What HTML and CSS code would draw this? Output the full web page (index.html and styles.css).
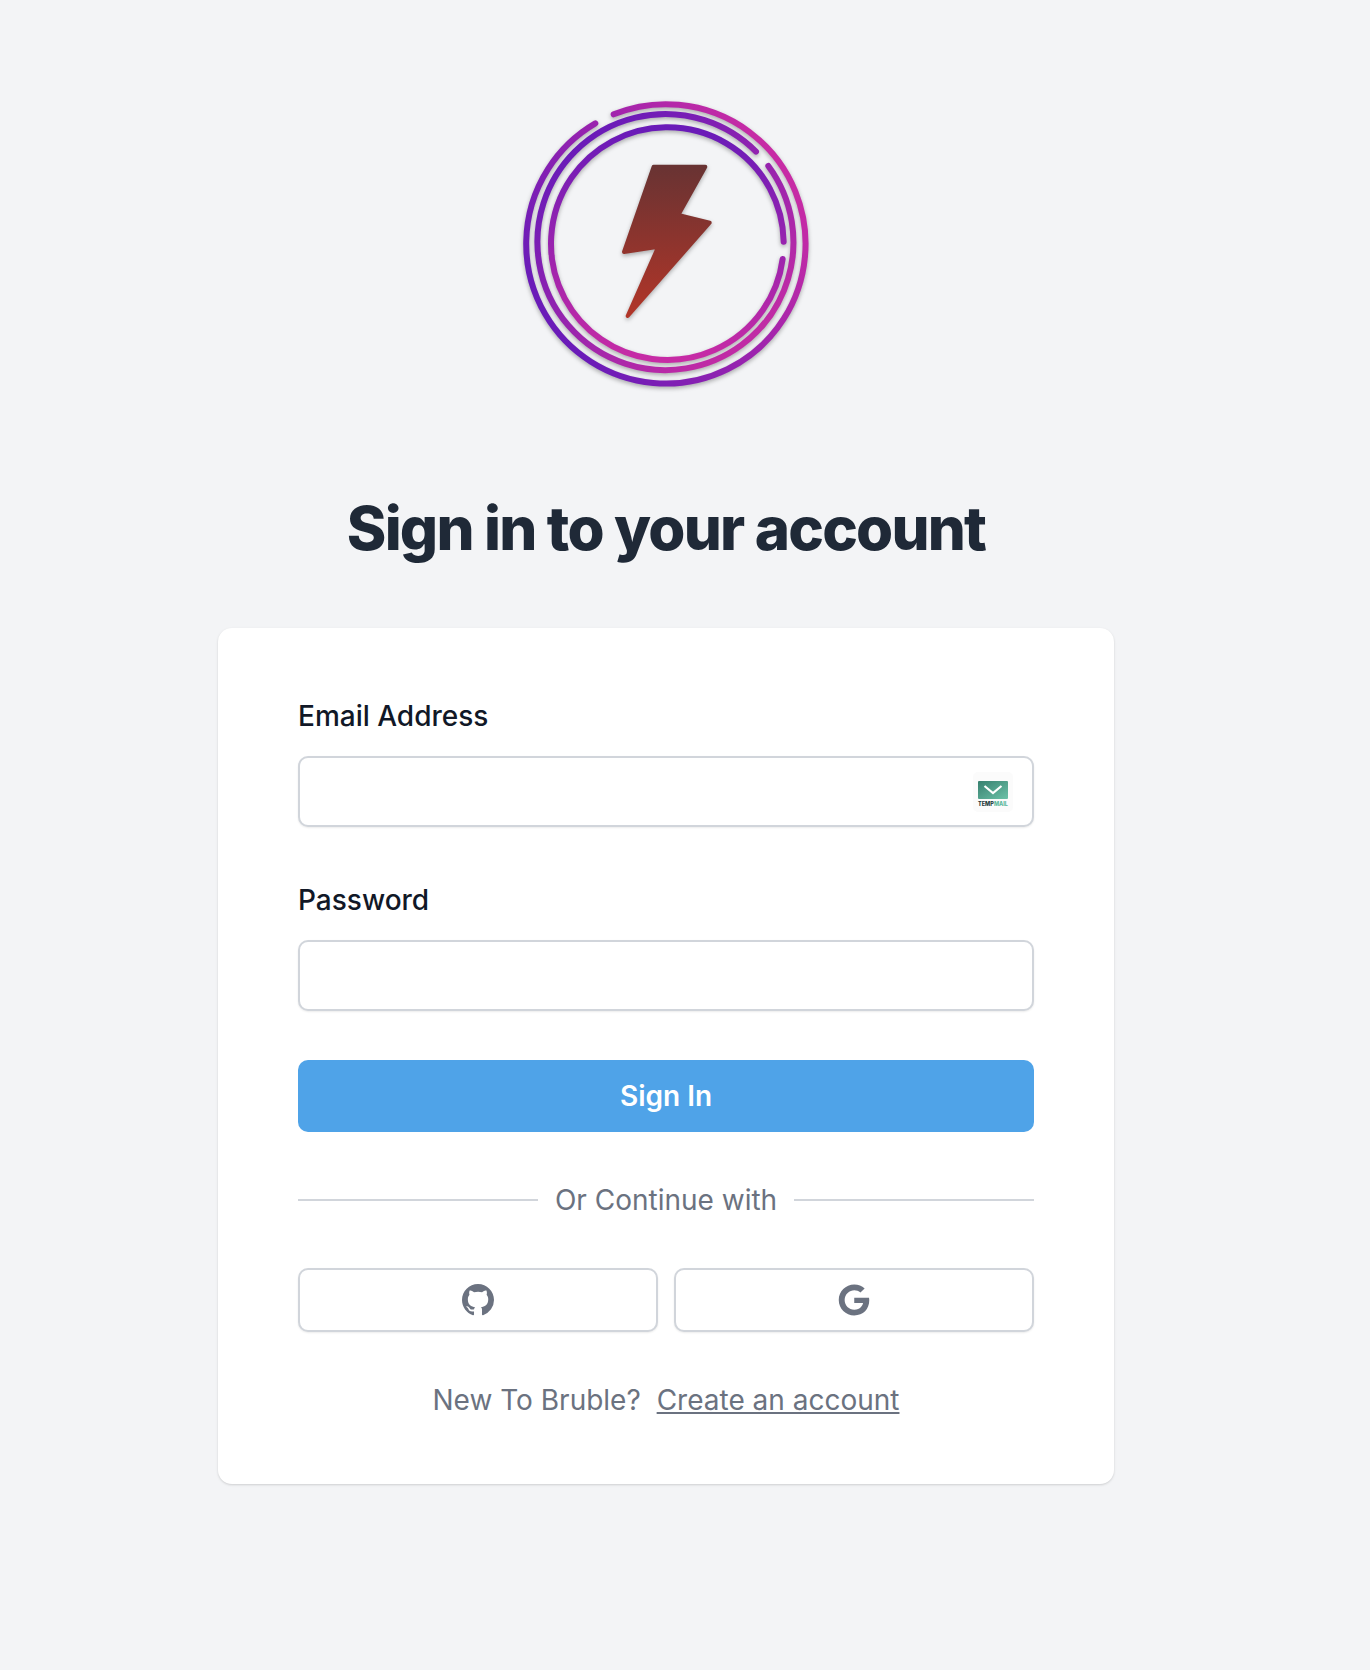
FILE: index.html
```html
<!DOCTYPE html>
<html lang="en">
<head>
<meta charset="utf-8">
<title>Sign in</title>
<link rel="stylesheet" href="styles.css">
</head>
<body>
<main class="page">
  <svg class="logo" viewBox="0 0 990 960" width="330" height="320" aria-label="Bruble logo">
    <defs>
      <linearGradient id="g1" gradientUnits="userSpaceOnUse" x1="120" y1="650" x2="800" y2="200"><stop offset="0" stop-color="#6a1bb8"/><stop offset="1" stop-color="#c72ba5"/></linearGradient>
      <linearGradient id="g2" gradientUnits="userSpaceOnUse" x1="230" y1="200" x2="700" y2="800"><stop offset="0" stop-color="#6a1bb8"/><stop offset="1" stop-color="#c02ba5"/></linearGradient>
      <linearGradient id="g3" gradientUnits="userSpaceOnUse" x1="500" y1="150" x2="500" y2="840"><stop offset="0" stop-color="#6a1bb8"/><stop offset="1" stop-color="#c72ba5"/></linearGradient>
      <linearGradient id="g4" gradientUnits="userSpaceOnUse" x1="500" y1="255" x2="500" y2="712"><stop offset="0" stop-color="#683333"/><stop offset="1" stop-color="#b23528"/></linearGradient>
    </defs>
    <g class="rings">
      <path stroke="url(#g1)" d="M338 103A419 419 0 1 1 283 130"/>
      <path stroke="url(#g2)" d="M802 258A384 384 0 1 1 765 215"/>
      <path stroke="url(#g3)" d="M845 537A349 349 0 1 1 848 485"/>
    </g>
    <path class="bolt" fill="url(#g4)" stroke="url(#g4)" d="M458 260H613L532 405L626 428L380 708L472 500L369 516Z"/>
  </svg>

  <h1 class="title">Sign in to your account</h1>

  <section class="card">
    <form class="form">
      <div class="field">
        <label class="label" for="email">Email Address</label>
        <div class="input-wrap">
          <input class="input" id="email" type="email">
          <span class="tempmail">
            <svg viewBox="0 0 30 18" width="30" height="18">
              <defs><linearGradient id="gm" x1="0" y1="0" x2="1" y2="1"><stop offset="0" stop-color="#37806f"/><stop offset="1" stop-color="#6cc2a8"/></linearGradient></defs>
              <rect width="30" height="18" rx="1" fill="url(#gm)"/>
              <path d="M6.500 5l8.500 7 8.500-7" fill="none" stroke="#fff" stroke-width="2.200"/>
            </svg>
            <span class="tempmail-text">TEMP<b class="tempmail-accent">MAIL</b></span>
          </span>
        </div>
      </div>
      <div class="field">
        <label class="label" for="password">Password</label>
        <input class="input" id="password" type="password">
      </div>
      <button class="submit" type="button">Sign In</button>
    </form>

    <div class="divider"><span class="divider-text">Or Continue with</span></div>

    <div class="socials">
      <button class="social" type="button" aria-label="GitHub">
        <svg viewBox="0 0 16 16" width="32" height="32" fill="#6b7280"><path d="M8 0C3.58 0 0 3.58 0 8c0 3.54 2.29 6.53 5.47 7.59.4.07.55-.17.55-.38 0-.19-.01-.82-.01-1.49-2.01.37-2.53-.49-2.69-.94-.09-.23-.48-.94-.82-1.13-.28-.15-.68-.52-.01-.53.63-.01 1.08.58 1.23.82.72 1.21 1.87.87 2.33.66.07-.52.28-.87.51-1.07-1.78-.2-3.64-.89-3.64-3.95 0-.87.31-1.59.82-2.15-.08-.2-.36-1.02.08-2.12 0 0 .67-.21 2.2.82.64-.18 1.32-.27 2-.27.68 0 1.36.09 2 .27 1.53-1.04 2.2-.82 2.2-.82.44 1.1.16 1.92.08 2.12.51.56.82 1.27.82 2.15 0 3.07-1.87 3.75-3.65 3.95.29.25.54.73.54 1.48 0 1.07-.01 1.93-.01 2.2 0 .21.15.46.55.38A8.013 8.013 0 0016 8c0-4.42-3.58-8-8-8z"/></svg>
      </button>
      <button class="social" type="button" aria-label="Google">
        <svg viewBox="0 0 488 512" width="32" height="32" fill="#6b7280"><path d="M488 261.8C488 403.3 391.1 504 248 504 110.8 504 0 393.2 0 256S110.8 8 248 8c66.8 0 123 24.5 166.3 64.9l-67.5 64.9C258.5 52.6 94.3 116.6 94.3 256c0 86.5 69.1 156.6 153.7 156.6 98.2 0 135-70.4 140.8-106.9H248v-85.3h236.1c2.3 12.7 3.9 24.9 3.9 41.4z"/></svg>
      </button>
    </div>

    <p class="signup">New To Bruble? <a class="signup-link" href="#">Create an account</a></p>
  </section>
</main>
</body>
</html>
```
FILE: styles.css
```css
* { box-sizing: border-box; }
html, body { margin: 0; height: 100%; }
body {
  background: #f3f4f6;
  font-family: Inter, "Liberation Sans", sans-serif;
  color: #111827;
  -webkit-font-smoothing: antialiased;
}
.page {
  display: flex;
  flex-direction: column;
  align-items: center;
  width: 1332px;
  min-height: 1670px;
  padding-top: 80px;
}
.logo { display: block; flex: none; filter: drop-shadow(0 2px 2px rgba(0,0,0,.3)); }
.rings path { fill: none; stroke-width: 18; stroke-linecap: round; }
.bolt { stroke-width: 12; stroke-linejoin: round; }
.title {
  margin: 90px 0 0;
  height: 76px;
  font-size: 60px;
  line-height: 76px;
  font-weight: 800;
  letter-spacing: -1.8px;
  color: #1f2937;
  text-align: center;
}
.card {
  width: 896px;
  height: 856px;
  margin-top: 62px;
  padding: 72px 80px 0;
  background: #fff;
  border-radius: 14px;
  box-shadow: 0 1px 3px rgba(0,0,0,.1), 0 1px 2px rgba(0,0,0,.06);
}
.form { display: flex; flex-direction: column; }
.field { display: flex; flex-direction: column; gap: 24px; margin-bottom: 57px; }
.field + .field { margin-bottom: 49px; }
.label {
  font-size: 28px;
  line-height: 32px;
  font-weight: 500;
  color: #111827;
}
.input-wrap { position: relative; }
.input {
  display: block;
  width: 100%;
  height: 71px;
  border: 2px solid #d1d5db;
  border-radius: 10px;
  background: #fff;
  outline: 0;
  box-shadow: 0 1px 2px rgba(0,0,0,.08);
}
.tempmail {
  position: absolute;
  top: 16px;
  right: 21px;
  width: 40px;
  height: 40px;
  display: flex;
  flex-direction: column;
  align-items: center;
  padding-top: 9px;
  background: #fbfbfb;
  border-radius: 5px;
}
.tempmail svg { display: block; flex: none; }
.tempmail-text {
  font-size: 5.5px;
  line-height: 6px;
  font-weight: 800;
  color: #1f3a3a;
  margin-top: 2px;
}
.tempmail-accent { color: #5db89c; font-weight: 800; }
.submit {
  display: block;
  width: 100%;
  height: 72px;
  border: 0;
  border-radius: 10px;
  background: #4fa3e8;
  color: #fff;
  font: 600 28px/36px Inter, "Liberation Sans", sans-serif;
}
.divider {
  display: flex;
  align-items: center;
  gap: 17px;
  margin-top: 50px;
  font-size: 28px;
  line-height: 36px;
  color: #6b7280;
}
.divider::before, .divider::after { content: ""; flex: 1; height: 2px; background: #d1d5db; }
.socials {
  display: grid;
  grid-template-columns: 1fr 1fr;
  gap: 16px;
  margin-top: 50px;
}
.social {
  display: flex;
  align-items: center;
  justify-content: center;
  height: 64px;
  padding: 0;
  background: #fff;
  border: 2px solid #d1d5db;
  border-radius: 10px;
  box-shadow: 0 1px 2px rgba(0,0,0,.08);
}
.signup {
  margin: 50px 0 0;
  text-align: center;
  font-size: 28px;
  line-height: 36px;
  color: #6b7280;
  white-space: pre-wrap;
}
.signup-link { color: #6b7280; text-decoration: underline; margin-left: 8px; }
```
